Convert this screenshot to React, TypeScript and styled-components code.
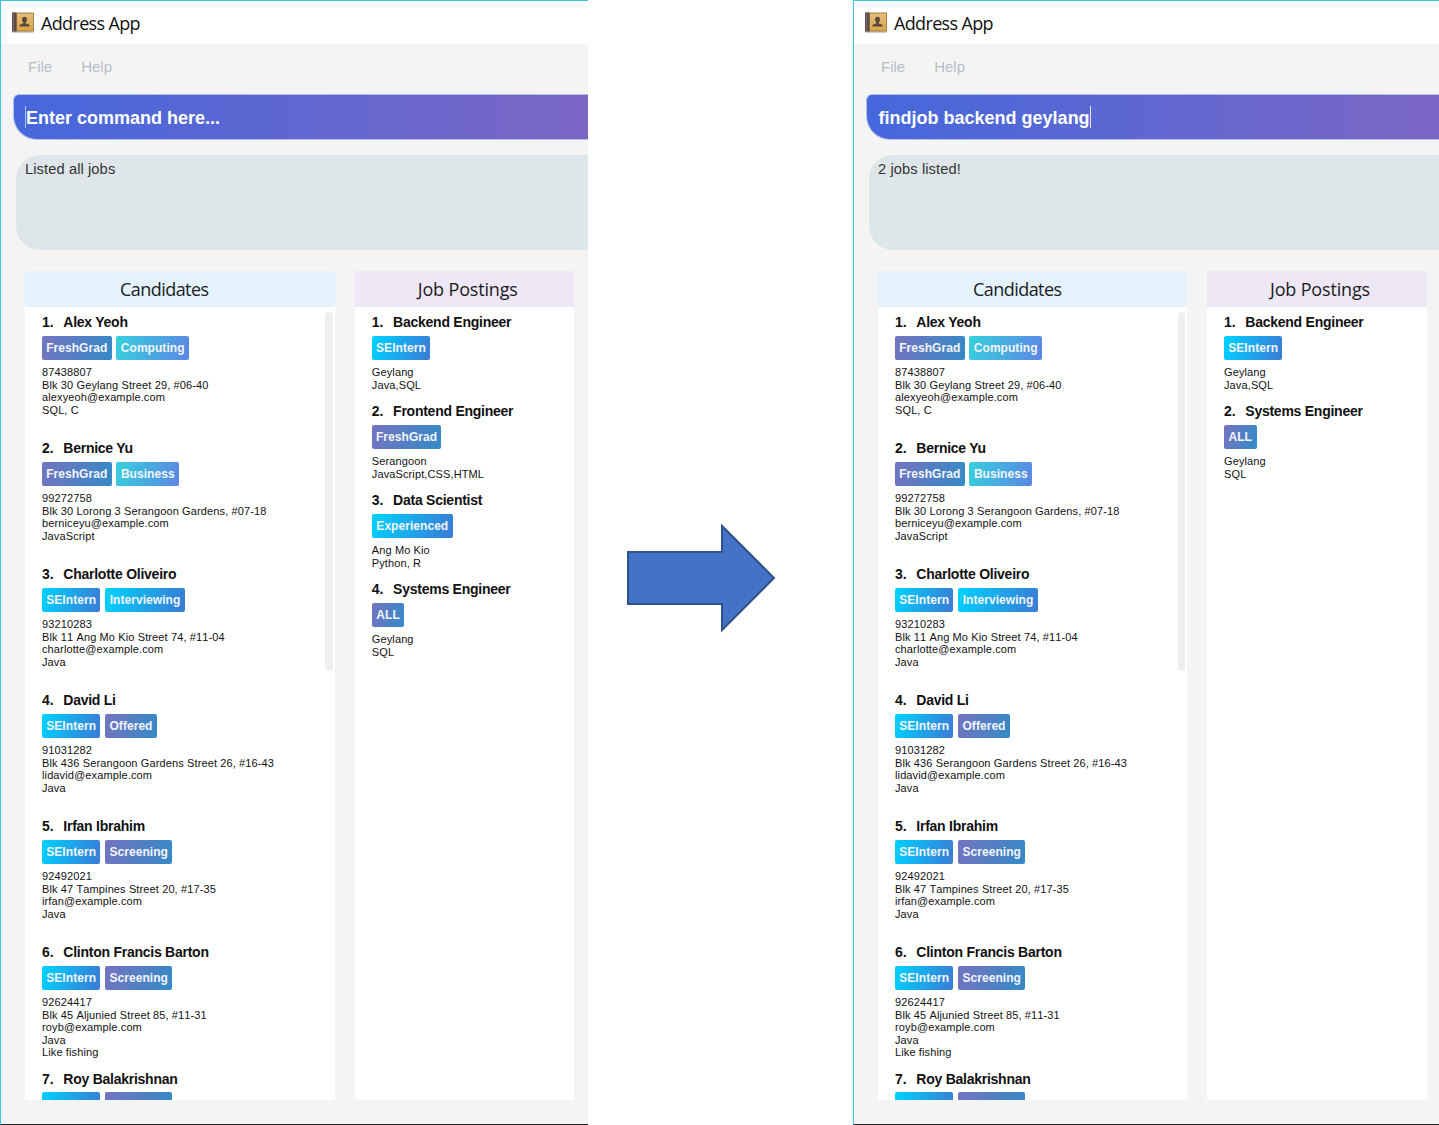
import React from "react";
import styled, { createGlobalStyle } from "styled-components";

const GlobalStyle = createGlobalStyle`
  * { box-sizing: border-box; }
  html, body { margin: 0; padding: 0; background: #fff; }
  body { font-family: "Liberation Sans", Arial, sans-serif; overflow: hidden; }
`;

type Tone = "violet" | "teal" | "sky";

const toneFill: Record<Tone, string> = {
  violet: "linear-gradient(105deg, #7474bf 0%, #348ac7 100%)",
  teal: "linear-gradient(105deg, #36d1dc 0%, #5b86e5 100%)",
  sky: "linear-gradient(105deg, #00d2ff 0%, #3a7bd5 100%)",
};

interface TagData {
  label: string;
  tone: Tone;
  width: number;
}
interface Entry {
  name: string;
  tags: TagData[];
  lines: string[];
}

const freshGrad: TagData = { label: "FreshGrad", tone: "violet", width: 69.5 };
const seIntern: TagData = { label: "SEIntern", tone: "sky", width: 58.3 };
const screening: TagData = { label: "Screening", tone: "violet", width: 67.5 };

const candidates: Entry[] = [
  {
    name: "Alex Yeoh",
    tags: [freshGrad, { label: "Computing", tone: "teal", width: 73 }],
    lines: ["87438807", "Blk 30 Geylang Street 29, #06-40", "alexyeoh@example.com", "SQL, C"],
  },
  {
    name: "Bernice Yu",
    tags: [freshGrad, { label: "Business", tone: "teal", width: 63.2 }],
    lines: ["99272758", "Blk 30 Lorong 3 Serangoon Gardens, #07-18", "berniceyu@example.com", "JavaScript"],
  },
  {
    name: "Charlotte Oliveiro",
    tags: [seIntern, { label: "Interviewing", tone: "sky", width: 80 }],
    lines: ["93210283", "Blk 11 Ang Mo Kio Street 74, #11-04", "charlotte@example.com", "Java"],
  },
  {
    name: "David Li",
    tags: [seIntern, { label: "Offered", tone: "violet", width: 52 }],
    lines: ["91031282", "Blk 436 Serangoon Gardens Street 26, #16-43", "lidavid@example.com", "Java"],
  },
  {
    name: "Irfan Ibrahim",
    tags: [seIntern, screening],
    lines: ["92492021", "Blk 47 Tampines Street 20, #17-35", "irfan@example.com", "Java"],
  },
  {
    name: "Clinton Francis Barton",
    tags: [seIntern, screening],
    lines: ["92624417", "Blk 45 Aljunied Street 85, #11-31", "royb@example.com", "Java", "Like fishing"],
  },
  // Only the top edge of this card's tags is in view, above their labels.
  {
    name: "Roy Balakrishnan",
    tags: [
      { ...seIntern, label: "" },
      { ...screening, label: "" },
    ],
    lines: [],
  },
];

const backend: Entry = { name: "Backend Engineer", tags: [seIntern], lines: ["Geylang", "Java,SQL"] };
const systems: Entry = {
  name: "Systems Engineer",
  tags: [{ label: "ALL", tone: "violet", width: 32.5 }],
  lines: ["Geylang", "SQL"],
};
const allJobs: Entry[] = [
  backend,
  { name: "Frontend Engineer", tags: [freshGrad], lines: ["Serangoon", "JavaScript,CSS,HTML"] },
  {
    name: "Data Scientist",
    tags: [{ label: "Experienced", tone: "sky", width: 81 }],
    lines: ["Ang Mo Kio", "Python, R"],
  },
  systems,
];

const Page = styled.main`
  display: flex;
  width: 1439px;
  height: 1125px;
  background: #fff;
`;

const Window = styled.section<{ $width: number }>`
  width: ${(p) => p.$width}px;
  height: 1125px;
  flex: none;
  display: flex;
  flex-direction: column;
  overflow: hidden;
  background: #f4f4f4;
  border-top: 1px solid #41c3d9;
  border-left: 1px solid #41c3d9;
  border-bottom: 1px solid #26262a;
`;

const TitleBar = styled.header`
  height: 43px;
  flex: none;
  display: flex;
  align-items: center;
  gap: 7px;
  padding: 0 0 0 11px;
  background: #fff;
  color: #111;
  font: 18px/24px "Open Sans", "Noto Sans", sans-serif;
`;

const TitleText = styled.span`
  letter-spacing: -0.65px;
  padding-top: 1px;
`;

const MenuBar = styled.nav`
  height: 50px;
  flex: none;
  display: flex;
  gap: 29px;
  padding: 14px 0 0 27px;
  font-size: 15px;
  line-height: 18px;
  color: #b4bfc4;
`;

const CommandBox = styled.div`
  height: 46px;
  flex: none;
  display: flex;
  align-items: center;
  margin-left: 12px;
  padding-left: 11px;
  border: 1px solid #b3bfe9;
  border-right: 0;
  border-radius: 6px 0 0 24px;
  background: linear-gradient(90deg, #4568dc 0%, #7b66c4 100%);
  color: #fff;
  font-size: 18px;
  font-weight: 700;
`;

const CommandText = styled.span<{ $indent?: number }>`
  padding: 2px 0 0 ${(p) => p.$indent ?? 0}px;
`;

const Caret = styled.i<{ $dim?: boolean }>`
  width: 1px;
  height: 22px;
  background: ${(p) => (p.$dim ? "#b5c2f1" : "#e4e4fa")};
`;

const ResultBox = styled.div`
  height: 95px;
  flex: none;
  margin: 15px 0 0 15px;
  padding: 5px 0 0 9px;
  border-radius: 24px 0 0 24px;
  background: #dee6e9;
  color: #333;
  font-size: 14.67px;
  line-height: 18px;
  letter-spacing: 0.1px;
`;

const Columns = styled.div`
  display: flex;
  align-items: flex-start;
  gap: 20px;
  padding: 21px 0 0 24px;
`;

const Panel = styled.section<{ $width: number }>`
  width: ${(p) => p.$width}px;
  height: 829px;
  flex: none;
  overflow: hidden;
  background: #fff;
`;

const PanelTitle = styled.h2<{ $fill: string; $indent: number; $tracking: number }>`
  height: 36px;
  margin: 0;
  padding-left: ${(p) => p.$indent}px;
  background: ${(p) => p.$fill};
  color: #1c1c1e;
  font: 400 18px/37px "Open Sans", "Noto Sans", sans-serif;
  letter-spacing: ${(p) => p.$tracking}px;
`;

const PanelBody = styled.div`
  display: flex;
  justify-content: space-between;
`;

const List = styled.ol`
  list-style: none;
  margin: 0;
  padding: 1px 0 0 17px;
  white-space: nowrap;
`;

const Card = styled.li<{ $height: number }>`
  height: ${(p) => p.$height}px;
`;

const CardName = styled.h3`
  display: flex;
  height: 27.5px;
  margin: 0;
  color: #111;
  font-size: 14px;
  line-height: 28px;
  letter-spacing: -0.25px;
`;

const Index = styled.span`
  width: 21.3px;
  letter-spacing: 0;
`;

const Tags = styled.div`
  display: flex;
  gap: 4.7px;
  height: 24.5px;
`;

const Tag = styled.span<{ $tone: Tone; $width: number }>`
  width: ${(p) => p.$width}px;
  border-radius: 2px;
  background: ${(p) => toneFill[p.$tone]};
  color: #f3f5fc;
  font-size: 12px;
  font-weight: 700;
  line-height: 25px;
  letter-spacing: 0.05px;
  text-align: center;
`;

const Details = styled.div`
  padding-top: 6px;
  color: #111;
  font-size: 11px;
  line-height: 12.5px;
  font-kerning: none;
  letter-spacing: 0.12px;
`;

const ScrollThumb = styled.i`
  width: 7.5px;
  height: 359px;
  margin: 5px 2px 0 0;
  border-radius: 4px;
  background: #efefef;
`;

const Middle = styled.div`
  width: 265px;
  flex: none;
  padding: 523px 0 0 38px;
`;

function BookIcon() {
  return (
    <svg width="22" height="22" viewBox="0 0 22 22">
      <defs>
        <linearGradient id="cover" x1="0" y1="0" x2="0" y2="1">
          <stop offset="0" stopColor="#e3bd7c" />
          <stop offset="1" stopColor="#dba548" />
        </linearGradient>
      </defs>
      <rect x="0.5" y="19" width="21" height="2" fill="#c9ccd2" />
      <rect x="0" y="0.5" width="22" height="19" rx="0.8" fill="#a67f42" />
      <rect x="5" y="1.5" width="16" height="17" fill="url(#cover)" />
      <rect x="0" y="0.5" width="4.5" height="19" rx="0.6" fill="#5d4c49" />
      <rect x="1" y="0.5" width="1" height="19" fill="#7c6b66" />
      <path
        d="M12.5 4.7c1.7 0 2.5 1.1 2.5 2.7 0 1.3-.7 2.2-1.2 2.8v1.3c1.6.5 4 .8 4 3H7.2c0-2.2 2.4-2.5 4-3v-1.3c-.5-.6-1.2-1.5-1.2-2.8 0-1.6.8-2.7 2.5-2.7z"
        fill="#5c4937"
      />
    </svg>
  );
}

function EntryList({ entries, height }: { entries: Entry[]; height: number }) {
  return (
    <List>
      {entries.map((entry, i) => (
        <Card key={entry.name} $height={height}>
          <CardName>
            <Index>{i + 1}.</Index>
            <span>{entry.name}</span>
          </CardName>
          <Tags>
            {entry.tags.map((tag, t) => (
              <Tag key={t} $tone={tag.tone} $width={tag.width}>
                {tag.label}
              </Tag>
            ))}
          </Tags>
          <Details>
            {entry.lines.map((line) => (
              <div key={line}>{line}</div>
            ))}
          </Details>
        </Card>
      ))}
    </List>
  );
}

interface AppWindowProps {
  width: number;
  listWidth: number;
  command: React.ReactNode;
  result: string;
  jobs: Entry[];
}

function AppWindow({ width, listWidth, command, result, jobs }: AppWindowProps) {
  return (
    <Window $width={width}>
      <TitleBar>
        <BookIcon />
        <TitleText>Address App</TitleText>
      </TitleBar>
      <MenuBar>
        <span>File</span>
        <span>Help</span>
      </MenuBar>
      <CommandBox>{command}</CommandBox>
      <ResultBox>{result}</ResultBox>
      <Columns>
        <Panel $width={listWidth}>
          <PanelTitle $fill="#e3f2fd" $indent={95} $tracking={-0.55}>
            Candidates
          </PanelTitle>
          <PanelBody>
            <EntryList entries={candidates} height={126.1} />
            <ScrollThumb />
          </PanelBody>
        </Panel>
        <Panel $width={219.7}>
          <PanelTitle $fill="#ede7f6" $indent={63} $tracking={-0.17}>
            Job Postings
          </PanelTitle>
          <PanelBody>
            <EntryList entries={jobs} height={89} />
          </PanelBody>
        </Panel>
      </Columns>
    </Window>
  );
}

export default function App() {
  return (
    <>
      <GlobalStyle />
      <Page>
        <AppWindow
          width={588}
          listWidth={309.8}
          command={
            <>
              <Caret $dim />
              <CommandText>Enter command here...</CommandText>
            </>
          }
          result="Listed all jobs"
          jobs={allJobs}
        />
        <Middle>
          <svg width="150" height="110" viewBox="0 0 150 110">
            <path d="M2 29H96V3L148 55L96 107V81H2Z" fill="#4472c4" stroke="#2f528f" strokeWidth="2" />
          </svg>
        </Middle>
        <AppWindow
          width={586}
          listWidth={309}
          command={
            <>
              <CommandText $indent={0.6}>findjob backend geylang</CommandText>
              <Caret />
            </>
          }
          result="2 jobs listed!"
          jobs={[backend, systems]}
        />
      </Page>
    </>
  );
}
